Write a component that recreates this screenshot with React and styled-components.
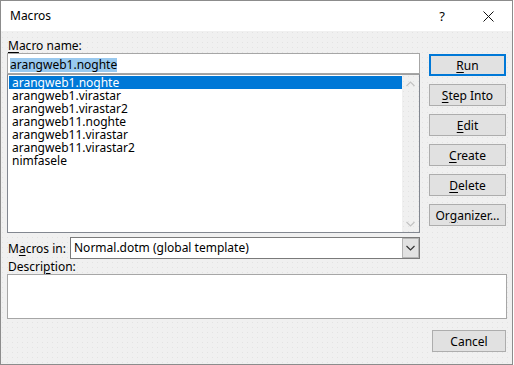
import React from 'react';
import styled, { createGlobalStyle } from 'styled-components';

const GlobalStyle = createGlobalStyle`
  html, body {
    margin: 0;
    padding: 0;
    background: #ffffff;
  }
  body {
    font-family: "Noto Sans", "Open Sans", sans-serif;
    font-size: 12px;
    color: #000000;
  }
`;

const macros = [
  'arangweb1.noghte',
  'arangweb1.virastar',
  'arangweb1.virastar2',
  'arangweb11.noghte',
  'arangweb11.virastar',
  'arangweb11.virastar2',
  'nimfasele',
];

const buttons = [
  { key: 'R', rest: 'un', isDefault: true },
  { key: 'S', rest: 'tep Into' },
  { key: 'E', rest: 'dit' },
  { key: 'C', rest: 'reate' },
  { key: 'D', rest: 'elete' },
  { pre: 'Or', key: 'g', rest: 'anizer...' },
];

const Chevron = ({ up, color }) => (
  <svg width="9" height="6" viewBox="0 0 9 6">
    <polyline
      points={up ? '0.5,5 4.5,1 8.5,5' : '0.5,1 4.5,5 8.5,1'}
      fill="none"
      stroke={color}
      strokeWidth="1.2"
    />
  </svg>
);

export default function App() {
  return (
    <>
      <GlobalStyle />
      <Window>
        <TitleBar>
          <Title>Macros</Title>
          <HelpGlyph>?</HelpGlyph>
          <CloseGlyph>
            <svg width="11" height="11" viewBox="0 0 11 11">
              <path d="M0.5 0.5 L10.5 10.5 M10.5 0.5 L0.5 10.5" stroke="#111" strokeWidth="1" />
            </svg>
          </CloseGlyph>
        </TitleBar>
        <Body>
          <Main>
            <LeftCol>
              <Label>
                <Key>M</Key>acro name:
              </Label>
              <NameInput>
                <Selected>arangweb1.noghte</Selected>
              </NameInput>
              <List>
                <Items>
                  {macros.map((m, i) => (
                    <Item key={m} $active={i === 0}>
                      {m}
                    </Item>
                  ))}
                </Items>
                <ScrollBar>
                  <ScrollArrow>
                    <Chevron up color="#c2c2c2" />
                  </ScrollArrow>
                  <ScrollArrow>
                    <Chevron color="#c2c2c2" />
                  </ScrollArrow>
                </ScrollBar>
              </List>
              <MacrosInRow>
                <InlineLabel>
                  M<Key>a</Key>cros in:
                </InlineLabel>
                <Select>
                  <SelectText>Normal.dotm (global template)</SelectText>
                  <SelectArrow>
                    <Chevron color="#333" />
                  </SelectArrow>
                </Select>
              </MacrosInRow>
            </LeftCol>
            <ButtonCol>
              {buttons.map((b) => (
                <Button key={b.key + b.rest} $isDefault={b.isDefault}>
                  {b.pre}
                  <Key>{b.key}</Key>
                  {b.rest}
                </Button>
              ))}
            </ButtonCol>
          </Main>
          <Label>
            Descri<Key>p</Key>tion:
          </Label>
          <DescBox />
          <Footer>
            <CancelButton>Cancel</CancelButton>
          </Footer>
        </Body>
      </Window>
    </>
  );
}

const dots = `
  background-color: #f0f0f0;
  background-image: radial-gradient(circle at 1.5px 1.5px, #e3e3e3 0.6px, transparent 1px);
  background-size: 5px 5px;
`;

const Window = styled.div`
  width: 513px;
  height: 365px;
  box-sizing: border-box;
  border: 1px solid #8c8c8c;
  display: flex;
  flex-direction: column;
  background: #ffffff;
`;

const TitleBar = styled.div`
  height: 30px;
  flex: none;
  display: flex;
  align-items: center;
  padding-left: 9px;
  background: #ffffff;
`;

const Title = styled.div`
  flex: 1;
  font-size: 12px;
  padding-bottom: 1px;
`;

const HelpGlyph = styled.div`
  width: 46px;
  text-align: center;
  font-size: 13px;
`;

const CloseGlyph = styled.div`
  width: 46px;
  height: 30px;
  display: flex;
  align-items: center;
  justify-content: center;
  margin-right: 1px;
`;

const Body = styled.div`
  flex: 1;
  display: flex;
  flex-direction: column;
  padding: 7px 5px 0 6px;
  ${dots}
`;

const Main = styled.div`
  display: flex;
  gap: 9px;
`;

const LeftCol = styled.div`
  width: 413px;
  display: flex;
  flex-direction: column;
`;

const Label = styled.div`
  height: 15px;
  line-height: 15px;
  padding-left: 1px;
`;

const Key = styled.span`
  text-decoration: underline;
  text-underline-offset: 2px;
`;

const NameInput = styled.div`
  height: 21px;
  box-sizing: border-box;
  border: 1px solid #a6a6a6;
  background: #ffffff;
  padding: 2px 0 0 2px;
`;

const Selected = styled.span`
  display: inline-block;
  height: 14px;
  line-height: 14px;
  background: #99c9ef;
`;

const List = styled.div`
  height: 159px;
  box-sizing: border-box;
  border: 1px solid #828790;
  border-top-color: #a0a0a0;
  background: #ffffff;
  display: flex;
`;

const Items = styled.div`
  flex: 1;
  padding: 1px 0 0 1px;
`;

const Item = styled.div`
  height: 13px;
  line-height: 13px;
  padding-left: 3px;
  white-space: nowrap;
  background: ${(p) => (p.$active ? '#0078d7' : 'transparent')};
  color: ${(p) => (p.$active ? '#ffffff' : '#000000')};
`;

const ScrollBar = styled.div`
  width: 17px;
  display: flex;
  flex-direction: column;
  justify-content: space-between;
  ${dots}
`;

const ScrollArrow = styled.div`
  height: 17px;
  display: flex;
  align-items: center;
  justify-content: center;
`;

const MacrosInRow = styled.div`
  display: flex;
  align-items: center;
  margin-top: 4px;
`;

const InlineLabel = styled.div`
  width: 62px;
  padding-left: 1px;
`;

const Select = styled.div`
  flex: 1;
  height: 22px;
  box-sizing: border-box;
  border: 1px solid #7a7a7a;
  background: #ffffff;
  display: flex;
`;

const SelectText = styled.div`
  flex: 1;
  line-height: 20px;
  padding-left: 3px;
`;

const SelectArrow = styled.div`
  width: 17px;
  box-sizing: border-box;
  border: 1px solid #b5b5b5;
  background: #e2e2e2;
  display: flex;
  align-items: center;
  justify-content: center;
`;

const ButtonCol = styled.div`
  display: flex;
  flex-direction: column;
  gap: 8px;
  margin-top: 16px;
`;

const Button = styled.div`
  width: 77px;
  height: 22px;
  box-sizing: border-box;
  border: ${(p) => (p.$isDefault ? '2px solid #0078d7' : '1px solid #adadad')};
  background: #e1e1e1;
  display: flex;
  align-items: center;
  justify-content: center;
`;

const DescBox = styled.div`
  width: 500px;
  height: 45px;
  box-sizing: border-box;
  border: 1px solid #a6a6a6;
  background: #ffffff;
`;

const Footer = styled.div`
  display: flex;
  justify-content: flex-end;
  padding-right: 1px;
  margin-top: 11px;
`;

const CancelButton = styled(Button)`
  width: 74px;
`;
